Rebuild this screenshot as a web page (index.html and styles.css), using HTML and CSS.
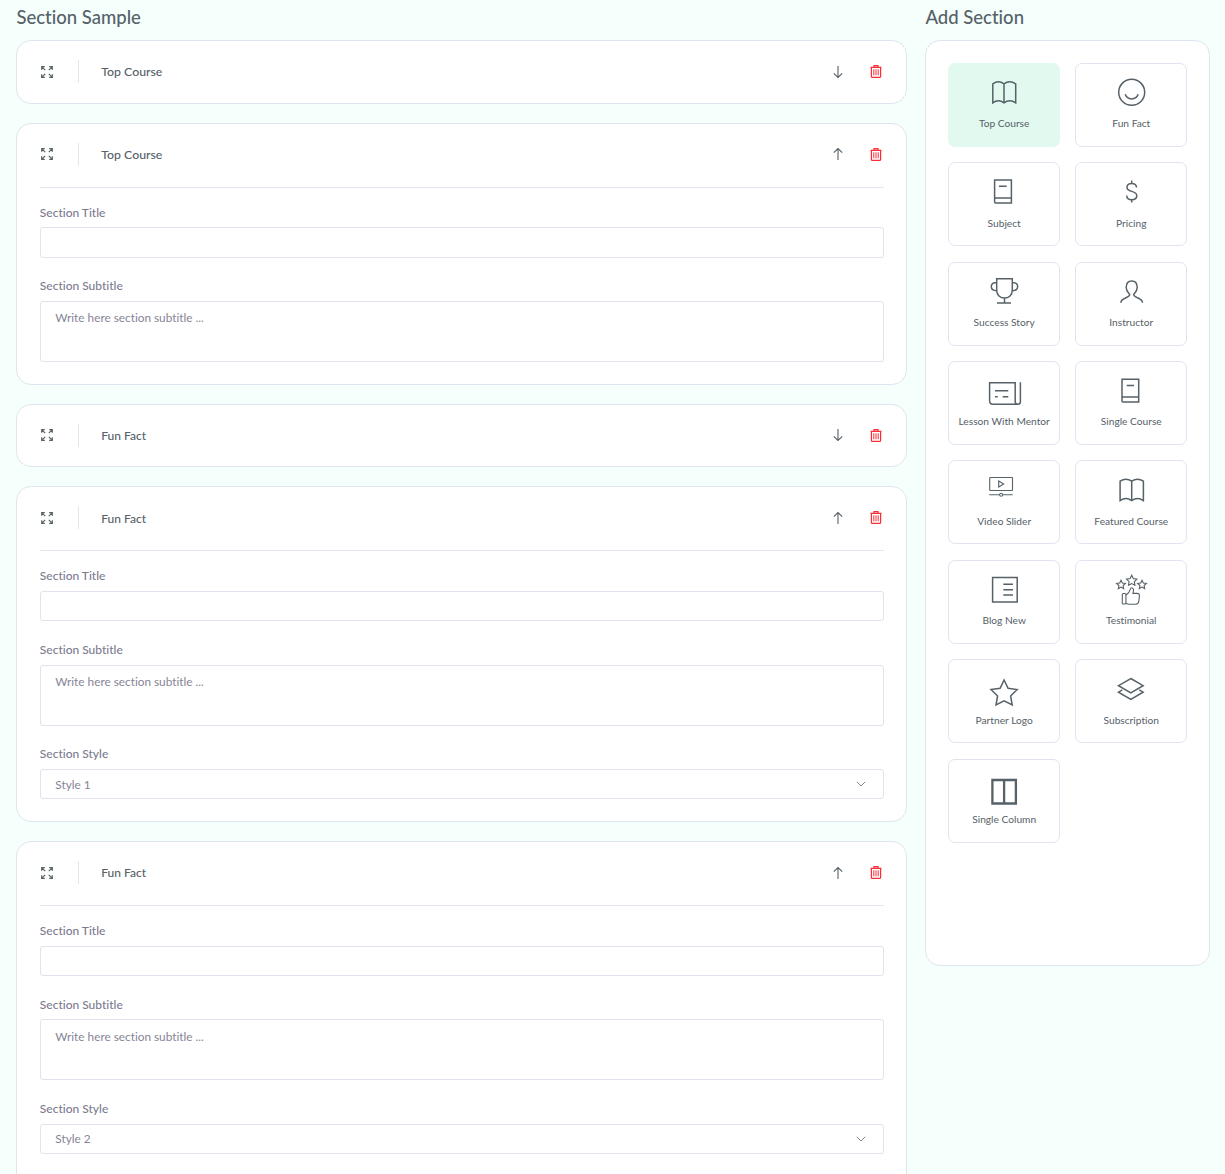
FILE: index.html
```html
<!DOCTYPE html>
<html lang="en">
<head>
<meta charset="utf-8">
<title>Section Sample</title>
<link rel="stylesheet" href="styles.css">
</head>
<body>
<svg class="defs" aria-hidden="true">
  <symbol id="expand" viewBox="0 0 12 12"><path d="M.7 3.800V.7h3.100M.9.9l3.300 3.300M8.200.7h3.100v3.100M11.100.9 7.800 4.200M.7 8.200v3.100h3.100M.9 11.100l3.300-3.300M8.200 11.300h3.100V8.200M11.100 11.100 7.800 7.800"/></symbol>
  <symbol id="down" viewBox="0 0 12 14"><path d="M6 1v11.500M1.800 8.300 6 12.500l4.200-4.200"/></symbol>
  <symbol id="up" viewBox="0 0 12 14"><path d="M6 13V1.500M1.800 5.700 6 1.500l4.200 4.200"/></symbol>
  <symbol id="trash" viewBox="0 0 12 13"><path d="M.5 2.300h11M4 2.200V.7h4v1.500M1.400 2.600v8.800q0 1 1 1h7.200q1 0 1-1V2.600"/><path stroke-width="1" d="M3.800 4.300v6M6 4.300v6M8.200 4.300v6"/></symbol>
  <symbol id="chev" viewBox="0 0 10 6"><path d="M.8.8 5 5 9.200.8"/></symbol>
</svg>
<div class="page">
  <main class="builder">
    <h1>Section Sample</h1>
    <div class="cards">
      <section class="card">
        <header><svg class="expand"><use href="#expand"/></svg><i class="bar"></i><h2>Top Course</h2><svg class="arrow"><use href="#down"/></svg><svg class="trash"><use href="#trash"/></svg></header>
      </section>
      <section class="card open">
        <header><svg class="expand"><use href="#expand"/></svg><i class="bar"></i><h2>Top Course</h2><svg class="arrow"><use href="#up"/></svg><svg class="trash"><use href="#trash"/></svg></header>
        <div class="fields">
          <div class="label">Section Title</div><div class="control"></div>
          <div class="label">Section Subtitle</div><div class="control area">Write here section subtitle ...</div>
        </div>
      </section>
      <section class="card">
        <header><svg class="expand"><use href="#expand"/></svg><i class="bar"></i><h2 class="fact">Fun Fact</h2><svg class="arrow"><use href="#down"/></svg><svg class="trash"><use href="#trash"/></svg></header>
      </section>
      <section class="card open">
        <header><svg class="expand"><use href="#expand"/></svg><i class="bar"></i><h2 class="fact">Fun Fact</h2><svg class="arrow"><use href="#up"/></svg><svg class="trash"><use href="#trash"/></svg></header>
        <div class="fields">
          <div class="label">Section Title</div><div class="control"></div>
          <div class="label">Section Subtitle</div><div class="control area">Write here section subtitle ...</div>
          <div class="label">Section Style</div><div class="control select">Style 1<svg><use href="#chev"/></svg></div>
        </div>
      </section>
      <section class="card open tall">
        <header><svg class="expand"><use href="#expand"/></svg><i class="bar"></i><h2 class="fact">Fun Fact</h2><svg class="arrow"><use href="#up"/></svg><svg class="trash"><use href="#trash"/></svg></header>
        <div class="fields">
          <div class="label">Section Title</div><div class="control"></div>
          <div class="label">Section Subtitle</div><div class="control area">Write here section subtitle ...</div>
          <div class="label">Section Style</div><div class="control select">Style 2<svg><use href="#chev"/></svg></div>
        </div>
      </section>
    </div>
  </main>
  <aside class="side">
    <h1>Add Section</h1>
    <div class="panel">
      <div class="tile active"><svg viewBox="0 0 44 40"><path d="M10.800 31.800V12.800q5.600-4 11.200 0 5.600-4 11.700 0v19q-6-4-11.700 0-5.600-4-11.200 0zM22 12.800v19"/></svg><span>Top Course</span></div>
      <div class="tile"><svg viewBox="0 0 44 40"><circle cx="22.700" cy="21.300" r="13"/><path d="M16.200 23.300a6.900 6.900 0 0 0 13 0"/></svg><span>Fun Fact</span></div>
      <div class="tile"><svg viewBox="0 0 44 40"><path d="M12.600 10.100h16.800v22.900H13.600q-1 0-1-1zM12.600 28h16.800M17 16.300h7.700"/></svg><span>Subject</span></div>
      <div class="tile"><svg viewBox="0 0 44 40"><path d="M22.700 10.500v2.900M22.700 29.800v2.700M27.600 17.500c-.2-2.500-2-4.100-4.900-4.100s-4.700 1.500-4.700 4c0 5.200 9.800 2.700 9.800 8.200 0 2.600-2 4.200-5.100 4.200s-4.900-1.600-5-4.300"/></svg><span>Pricing</span></div>
      <div class="tile"><svg viewBox="0 0 44 40"><path d="M14.700 8.700h15.600v11.500c0 4.700-3.500 7.900-7.800 7.900s-7.800-3.200-7.800-7.900zM22.500 28v5M15 33h14M14.700 12.500c-3.300 0-5.400 1.600-5.400 4.100s2.100 4.100 5.400 4.100M30.300 12.500c3.300 0 5.400 1.600 5.400 4.100s-2.100 4.100-5.400 4.100"/></svg><span>Success Story</span></div>
      <div class="tile"><svg viewBox="0 0 44 40"><path d="M11.900 32.700c0-5.700 8.800-4.300 8.800-8.100 0-1.200-3.500-2.500-3.500-7 0-4 2.200-6.500 5.500-6.500s5.500 2.500 5.500 6.500c0 4.500-3.500 5.800-3.500 7 0 3.800 8.800 2.400 8.800 8.100"/></svg><span>Instructor</span></div>
      <div class="tile"><svg viewBox="0 0 44 40"><path d="M38.400 13.200v19.500q0 2.500-2.600 2.500t-2.600-2.500V13.700H7.600v18q0 3.500 3.500 3.500h24.700M13 21.700h13.300M13 27.700h2.700M20.700 27.700h5.600"/></svg><span>Lesson With Mentor</span></div>
      <div class="tile"><svg viewBox="0 0 44 40"><path d="M13 10.200h16.700v22.900H14q-1 0-1-1zM13 28h16.700M17.700 16.400H25"/></svg><span>Single Course</span></div>
      <div class="tile"><svg class="thin" viewBox="0 0 44 40"><rect x="7.700" y="9.500" width="22.800" height="13" rx=".6"/><path d="M16.700 13v6l5-3zM7.300 26.800h10.200M20.700 26.800h10"/><circle cx="19.100" cy="26.800" r="1.500"/></svg><span>Video Slider</span></div>
      <div class="tile"><svg viewBox="0 0 44 40"><path d="M11.100 32.600V13.200q5.800-4 11.600 0 5.800-4 11.700 0v19.400q-6-4-11.700 0-5.800-4-11.600 0zM22.700 13.200v19.400"/></svg><span>Featured Course</span></div>
      <div class="tile"><svg viewBox="0 0 44 40"><path d="M10.600 9.500h24.600v24.600H10.600zM21.300 16.300H31M21.300 21.800H31M21.300 27.100H31"/></svg><span>Blog New</span></div>
      <div class="tile"><svg class="thin" viewBox="0 0 44 40"><path d="m22.700 7.300 1.600 3.300 3.600.5-2.600 2.500.6 3.600-3.200-1.700-3.200 1.700.6-3.600-2.600-2.500 3.600-.5zM12 12.200l1.300 2.800 3.100.4-2.300 2.100.6 3.100-2.700-1.500-2.700 1.500.6-3.100-2.300-2.100 3.100-.4zM33 12.200l1.300 2.800 3.100.4-2.300 2.100.6 3.100-2.700-1.500-2.700 1.500.6-3.100-2.300-2.100 3.100-.4z"/><rect x="13.300" y="25.500" width="3.600" height="10.500" rx="1"/><path d="M16.900 27.200c2.300-1.300 3.800-3.800 4.500-6.100.4-1.200 1-1.500 1.900-1.200 1.600.5 1.300 3.200.6 5.500h4.300c1.700 0 2.400 1.200 2.200 2.700l-.6 5.200c-.2 1.900-1.300 2.900-3.200 2.900h-6.200q-2 0-3.500-1"/></svg><span>Testimonial</span></div>
      <div class="tile"><svg viewBox="0 0 44 40"><path d="m22.100 13 4 8.300 9.100 1.300-6.600 6.400 1.600 9-8.100-4.200L14 38l1.600-9L9 22.600l9.100-1.300z"/></svg><span>Partner Logo</span></div>
      <div class="tile"><svg viewBox="0 0 44 40"><path d="m21.800 11.500 12.300 7.200-12.300 7.200L9.500 18.700zM13.300 22.900l-3.800 2.300 12.300 7.200 12.300-7.200-3.800-2.300"/></svg><span>Subscription</span></div>
      <div class="tile"><svg class="bold" viewBox="0 0 44 40"><path d="M10.400 13h23.500v23.500H10.400zM22.100 13v23.500"/></svg><span>Single Column</span></div>
    </div>
  </aside>
</div>
</body>
</html>
```
FILE: styles.css
```css
* { box-sizing: border-box; }
html { overflow: hidden; }
body {
  margin: 0;
  height: 1174px;
  overflow: hidden;
  background: #f5fffc;
  color: #566168;
  font-family: Lato, "Open Sans", sans-serif;
  font-variant-ligatures: none;
}
svg { flex: none; fill: none; stroke: currentColor; }
.defs { display: none; }
.page { display: flex; gap: 18.400px; padding: 5px 0 0 16.400px; align-items: flex-start; }
.builder { width: 890.600px; }
.side { width: 284.600px; }
h1 { margin: 0; height: 35px; font-size: 18.500px; line-height: 25px; font-weight: 500; }
.cards { display: flex; flex-direction: column; gap: 19px; }
.card { flex: none; border: 1px solid #dfe5ee; border-radius: 15px; background: #fff; padding: 0 22.400px; }
header { display: flex; align-items: center; height: 61.600px; }
.open header { height: 64px; padding-bottom: 1.400px; border-bottom: 1px solid #e3e6ef; }
.expand { width: 12px; height: 12px; margin-left: 1.400px; stroke-width: 1.200; }
.bar { width: 1px; height: 23px; margin: 0 22.500px 0 24.600px; background: #e3e6ef; }
h2 { flex: 1; margin: 0; padding-top: 1.200px; font-size: 12.300px; line-height: 18px; font-weight: 500; }
.fact { font-size: 12px; }
.arrow { width: 12px; height: 14px; margin-right: 26px; stroke-width: 1.100; }
.trash { width: 12px; height: 13px; margin-right: 1.300px; color: #fb2d36; stroke-width: 1.200; }
.fields { padding: 15.700px 0 21.600px; }
.tall .fields { padding-bottom: 34px; }
.label { padding-top: .5px; margin-bottom: 5.500px; font-size: 12px; line-height: 18px; font-weight: 500; color: #7c7c90; }
.control { height: 30.500px; margin-bottom: 19.200px; border: 1px solid #e0e3ee; border-radius: 3px; padding: 0 15px 0 14.500px; font-size: 11.800px; line-height: 29px; color: #858596; }
.area { height: 61px; padding-top: 7.500px; line-height: 18px; }
.select { display: flex; align-items: center; justify-content: space-between; height: 30.700px; }
.control:last-child { margin-bottom: 0; }
.select svg { width: 10px; height: 6px; margin-right: 2px; }
.panel { display: grid; grid-template-columns: 111.600px 111.600px; grid-auto-rows: 84px; align-content: start; gap: 15.400px 15.500px; height: 925.600px; padding: 21.900px 22px; border: 1px solid #dfe5ee; border-radius: 15px; background: #fff; }
.tile { display: flex; flex-direction: column; align-items: center; border: 1px solid #e1e4f0; border-radius: 7px; padding-top: 7px; }
.tile svg { width: 44px; height: 40px; stroke-width: 1.500; }
.tile .thin { stroke-width: 1.100; }
.tile .bold { stroke-width: 2.300; }
.tile span { margin-top: 4.300px; font-size: 10.200px; line-height: 16px; white-space: nowrap; }
.active { background: #e2f9ef; border-color: #e2f9ef; }
```
